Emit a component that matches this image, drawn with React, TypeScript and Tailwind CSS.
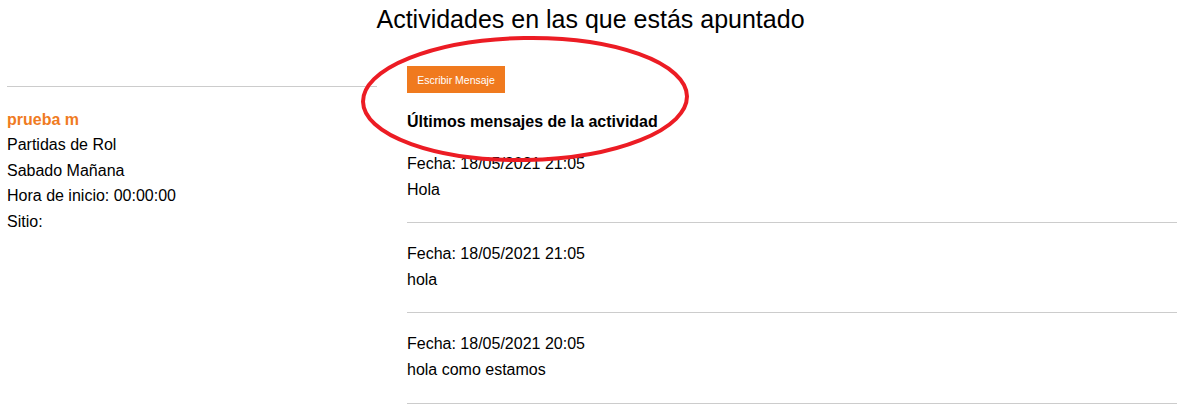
import React from "react";

interface Mensaje {
  fecha: string;
  texto: string;
}

const mensajes: Mensaje[] = [
  { fecha: "18/05/2021 21:05", texto: "Hola" },
  { fecha: "18/05/2021 21:05", texto: "hola" },
  { fecha: "18/05/2021 20:05", texto: "hola como estamos" },
];

const App: React.FC = () => {
  return (
    <div
      className="relative w-[1181px] h-[409px] overflow-hidden bg-white text-black"
      style={{ fontFamily: '"Liberation Sans", Arial, sans-serif' }}
    >
      <h1 className="pt-[6px] text-center text-[25px] leading-[27.6px] font-normal">
        Actividades en las que estás apuntado
      </h1>

      <div className="mt-[32px] flex pl-[7px] pr-[4px] gap-[30px]">
        {/* actividad */}
        <div className="w-[370px] shrink-0 pt-[20px] text-[16px] leading-[25.6px]">
          <hr className="border-0 border-t border-[#cccccc]" />
          <div className="mt-[20px]">
            <div className="font-bold text-[#f07b22]">prueba m</div>
            <div>Partidas de Rol</div>
            <div>Sabado Mañana</div>
            <div>Hora de inicio: 00:00:00</div>
            <div>Sitio:</div>
          </div>
        </div>

        {/* mensajes */}
        <div className="flex-1 text-[16px] leading-[25.6px]">
          <button className="h-[27px] w-[98px] bg-[#f07a1e] text-[10.5px] leading-none text-white">
            Escribir Mensaje
          </button>
          <h2 className="mt-[16px] font-bold">Últimos mensajes de la actividad</h2>
          <div>
            {mensajes.map((m, i) => (
              <div
                key={i}
                className={`${i === 0 ? "pt-[16px]" : "pt-[18px]"} pb-[20px] border-b border-[#cccccc]`}
              >
                <div>Fecha: {m.fecha}</div>
                <div>{m.texto}</div>
              </div>
            ))}
          </div>
        </div>
      </div>

      {/* marca roja dibujada encima */}
      <svg
        className="pointer-events-none absolute left-0 top-0"
        width="1181"
        height="409"
        viewBox="0 0 1181 409"
      >
        <ellipse
          cx="525"
          cy="99"
          rx="162"
          ry="61"
          fill="none"
          stroke="#ec1c24"
          strokeWidth="4"
          transform="rotate(-1 525 99)"
        />
      </svg>
    </div>
  );
};

export default App;
